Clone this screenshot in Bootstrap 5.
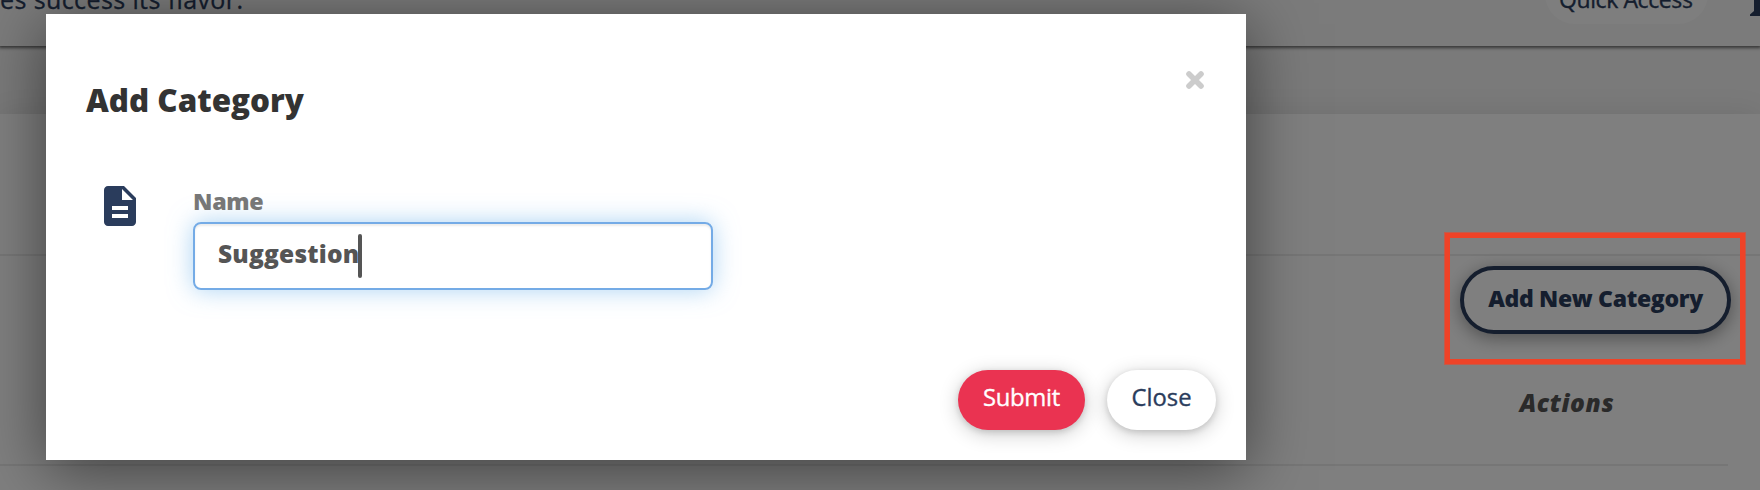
<!DOCTYPE html>
<html lang="en">
<head>
<meta charset="utf-8">
<meta name="viewport" content="width=device-width, initial-scale=1">
<title>Add Category</title>
<link rel="stylesheet" href="https://cdn.jsdelivr.net/npm/bootstrap@5.3.0/dist/css/bootstrap.min.css">
<style>
  :root { --navy: #2a3c5c; }
  body { font-family: "Open Sans", "Noto Sans", sans-serif; font-size: 24px; height: 490px; color: var(--navy); background: #f4f4f4; }
  .heavy { font-weight: 800; }
  .medium { font-weight: 500; -webkit-text-stroke: .35px currentColor; }
  .topbar { height: 46px; background: #f6f6f6; box-shadow: 0 1px 3px 1px rgba(0,0,0,.55); position: relative; }
  .tagline { font-size: 25px; line-height: 32px; letter-spacing: .4px; margin-top: -17px; -webkit-text-stroke: .3px currentColor; }
  .quick { font-size: 23px; line-height: 32px; letter-spacing: -.4px; height: 60px; padding: 0 0 9px 14px; width: 163px; margin-top: -36px; background: #fdfdfd; border-radius: 30px; }
  .profile { margin-left: 42px; }
  .panel { margin-top: 68px; height: 376px; background: #fff; box-shadow: 0 0 28px rgba(0,0,0,.09); }
  .panel-head { height: 142px; border-bottom: 2px solid #ececec; }
  .table-row { height: 132px; margin-right: 32px; border-bottom: 2px solid #ececec; }
  .panel-tools { height: 78px; padding: 10px 29px 0 0; }
  .btn-outline-navy { --bs-btn-color: var(--navy); width: 271px; height: 68px; padding: 0; border: 4px solid var(--navy); border-radius: 34px; font-size: 23px; line-height: 54px; letter-spacing: -.33px; padding-bottom: 5px; box-shadow: 0 4px 18px rgba(0,0,0,.38); background: #fff; }
  .col-title { width: 320px; font-size: 24.5px; line-height: 34px; padding-top: 52px; padding-right: 2px; color: #555; letter-spacing: .6px; }
  .shade { background: rgba(0,0,0,.5); }
  .dialog-box { top: 14px; left: 46px; width: 1200px; height: 446px; background: #fff; box-shadow: 0 10px 60px rgba(0,0,0,.5); padding: 57px 30px 30px 40px; }
  .dialog-title { font-size: 31.4px; line-height: 40px; color: #333; padding-top: 9px; }
  .x-btn { padding: 0 12px 0 0; line-height: 0; }
  .field-row { padding: 62px 0 0 10px; }
  .field-group { margin-left: 49px; }
  .field-label { font-size: 23.3px; line-height: 38px; padding-bottom: 2px; letter-spacing: -.3px; color: #777; }
  .field-box { width: 520px; height: 68px; border: 2px solid #74abe6; border-radius: 8px; padding: 0 23px; font-size: 24.5px; letter-spacing: .2px; color: #555; box-shadow: inset 0 2px 2px rgba(0,0,0,.075), 0 0 24px rgba(102,175,233,.55); }
  .field-value { margin-bottom: 3px; }
  .caret { width: 4px; height: 44px; border-radius: 2px; background: #555; margin-left: -1px; }
  .pill { height: 60px; border: 0; border-radius: 30px; font-size: 23.8px; padding: 0 0 4px; box-shadow: 0 4px 20px rgba(0,0,0,.2), 0 2px 6px rgba(0,0,0,.14); }
  .pill-submit { width: 127px; background: #ea3351; color: #fff; letter-spacing: -.3px; margin-right: 22px; }
  .pill-close { width: 109px; background: #fff; color: var(--navy); }
  .callout { top: 233px; left: 1445px; width: 300px; height: 131px; border: 5px solid #ee4328; box-shadow: 0 0 0 1px rgba(238,67,40,.6); }
</style>
</head>
<body class="overflow-hidden position-relative">
  <header class="topbar d-flex justify-content-between align-items-start">
    <div class="tagline text-nowrap">es success its flavor.</div>
    <div class="d-flex align-items-start">
      <div class="quick medium text-nowrap d-flex align-items-end">Quick Access</div>
      <svg class="profile" width="10" height="16" aria-hidden="true"><path d="M4 0H10V16H0V14.500L4 11Z" fill="#2a3c5c"/></svg>
    </div>
  </header>

  <main class="panel">
    <div class="panel-head"></div>
    <div class="panel-tools d-flex justify-content-end align-items-start">
      <button class="btn btn-outline-navy heavy text-nowrap">Add New Category</button>
    </div>
    <div class="table-row d-flex justify-content-end">
      <div class="col-title heavy fst-italic text-center">Actions</div>
    </div>
  </main>

  <div class="shade position-absolute top-0 start-0 w-100 h-100"></div>

  <section class="dialog-box position-absolute d-flex flex-column" role="dialog" aria-label="Add Category">
    <div class="d-flex justify-content-between align-items-start">
      <h4 class="dialog-title heavy m-0">Add Category</h4>
      <button class="btn border-0 x-btn" aria-label="Dismiss">
        <svg width="18" height="18" viewBox="0 0 18 18"><path d="M3 3L15 15M15 3L3 15" stroke="#ccc" stroke-width="5.6" stroke-linecap="round"/></svg>
      </button>
    </div>
    <div class="field-row d-flex">
      <svg width="48" height="48" viewBox="0 0 24 24" fill="#2a3c5c" aria-hidden="true"><path d="M14 2H6c-1.100 0-2 .9-2 2v16c0 1.100.9 2 2 2h12c1.100 0 2-.9 2-2V8l-6-6zm2 16H8v-2h8v2zm0-4H8v-2h8v2zm-3-5V3.500L18.500 9H13z"/></svg>
      <div class="field-group">
        <div class="field-label heavy">Name</div>
        <div class="field-box heavy d-flex align-items-center"><span class="field-value">Suggestion</span><span class="caret"></span></div>
      </div>
    </div>
    <div class="d-flex justify-content-end mt-auto">
      <button class="btn pill pill-submit medium">Submit</button>
      <button class="btn pill pill-close medium">Close</button>
    </div>
  </section>

  <div class="callout position-absolute"></div>
</body>
</html>
